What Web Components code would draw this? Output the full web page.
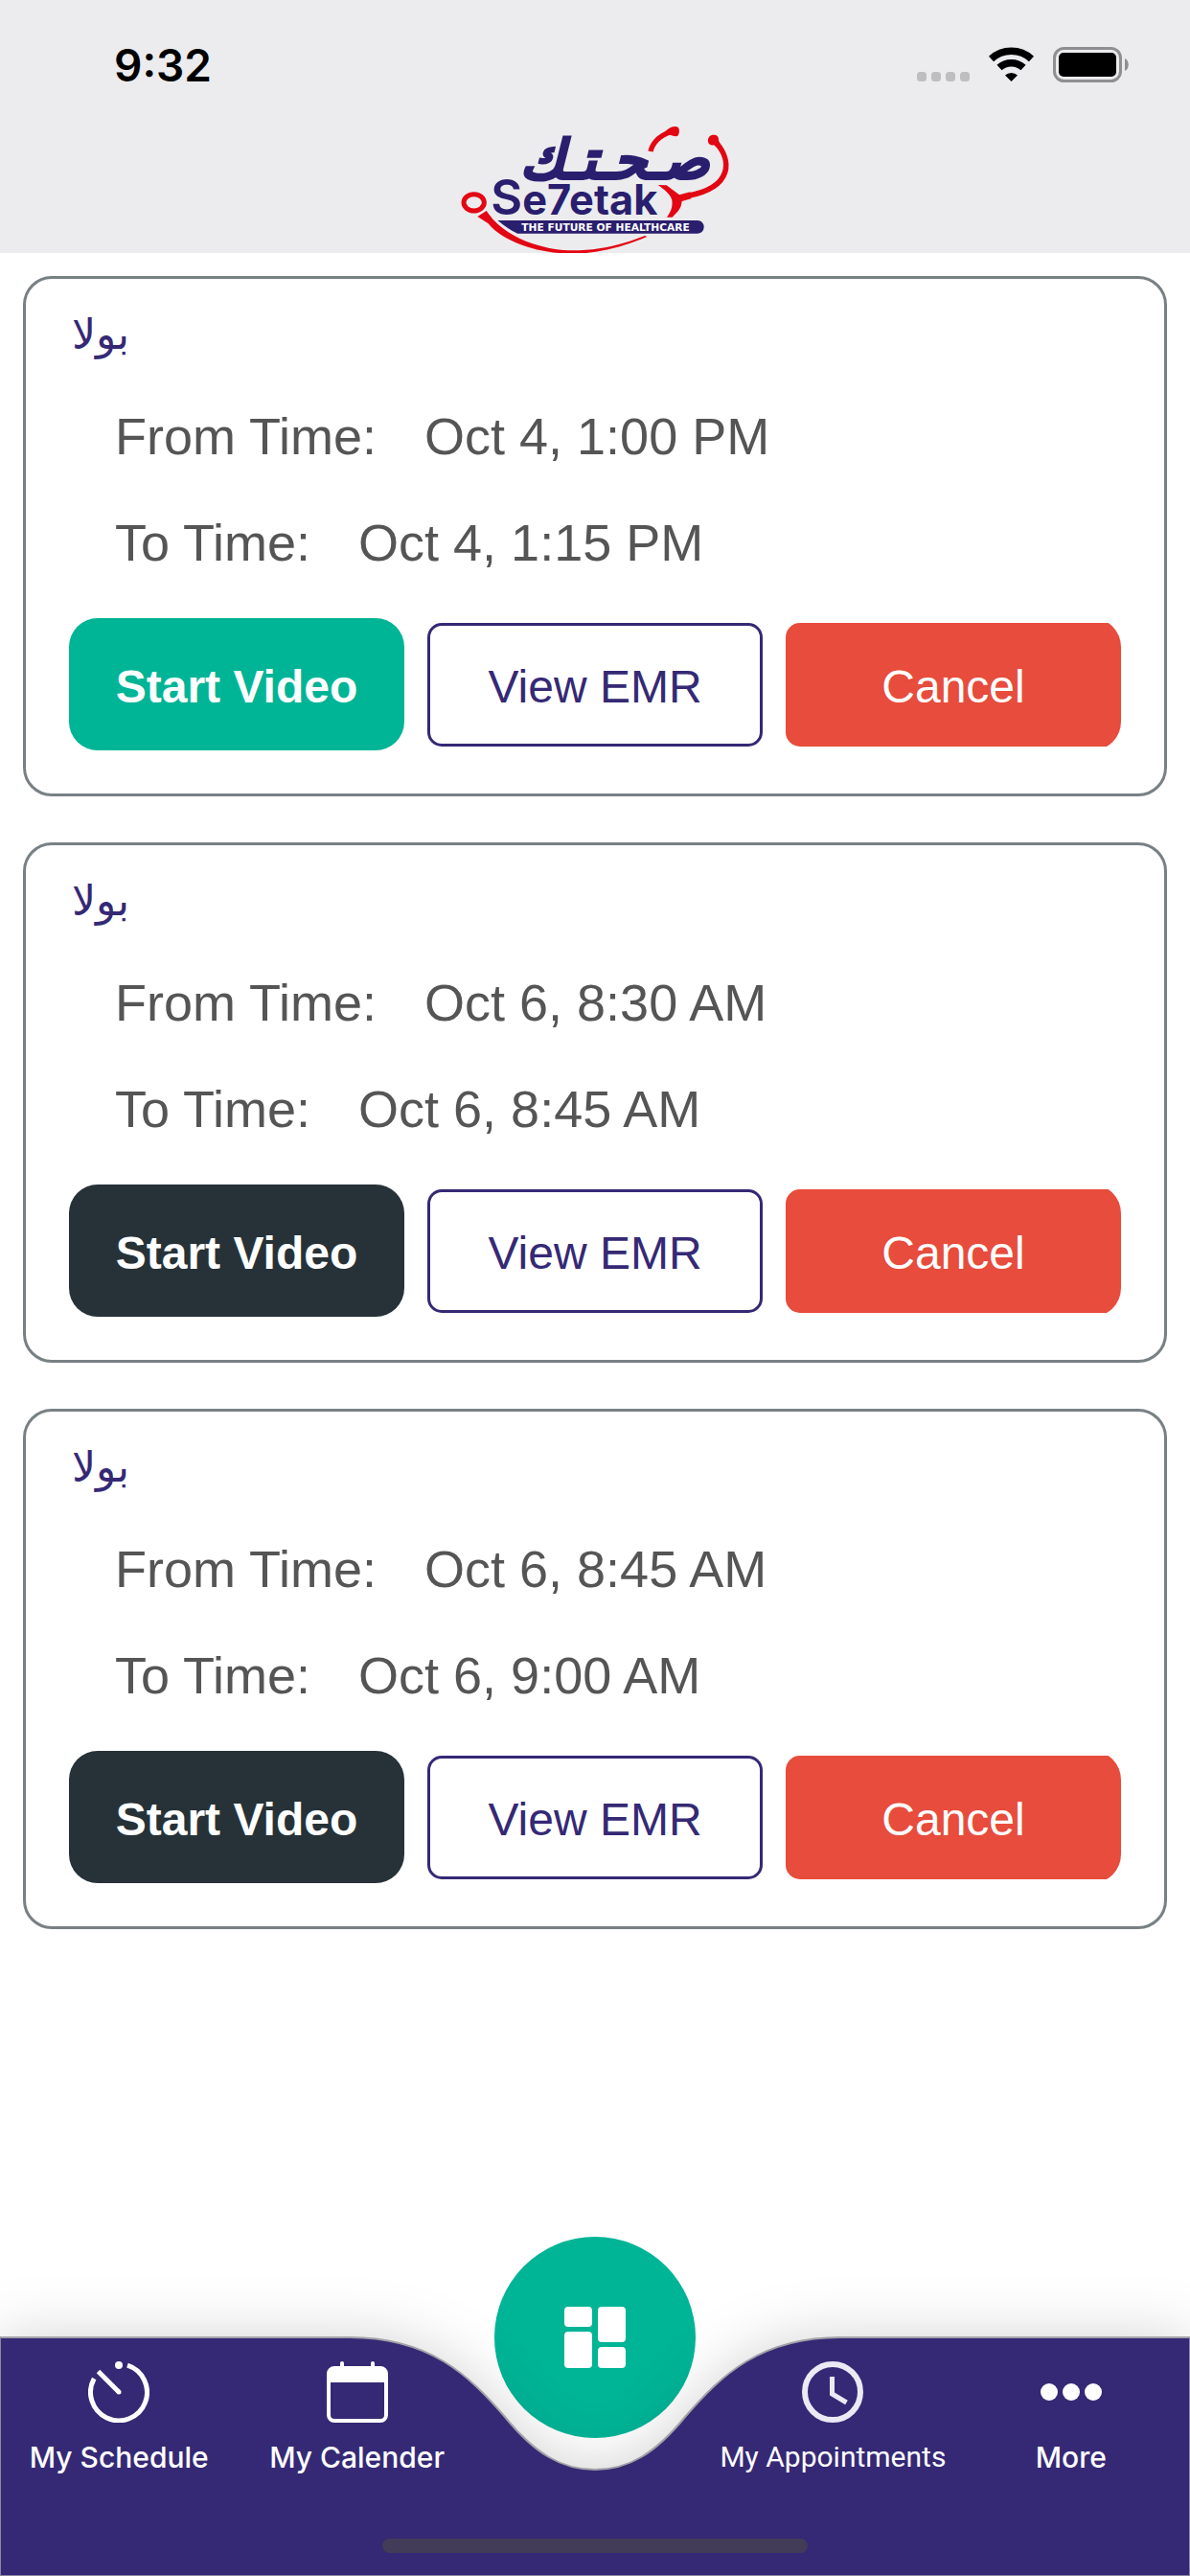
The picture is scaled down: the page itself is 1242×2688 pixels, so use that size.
<!DOCTYPE html>
<html lang="en">
<head>
<meta charset="utf-8">
<meta name="viewport" content="width=device-width, initial-scale=1">
<title>Se7etak – My Appointments</title>
<style>
  html, body { margin: 0; min-height: 100%; }
  body { background: #fff; font-family: "Liberation Sans", Arial, sans-serif; color: #555; }
</style>
</head>
<body>
<app-screen>
  <status-bar slot="header" time="9:32"></status-bar>
  <brand-logo slot="header"></brand-logo>
  <appointment-card name="بولا" from="Oct 4, 1:00 PM" to="Oct 4, 1:15 PM" active></appointment-card>
  <appointment-card name="بولا" from="Oct 6, 8:30 AM" to="Oct 6, 8:45 AM"></appointment-card>
  <appointment-card name="بولا" from="Oct 6, 8:45 AM" to="Oct 6, 9:00 AM"></appointment-card>
  <tab-bar slot="footer">
    <tab-item label="My Schedule">
      <svg width="64" height="64" viewBox="0 0 64 64" fill="none" stroke="#fff" stroke-width="5" aria-hidden="true">
        <path d="M41 4.200A29.500 29.500 0 1 1 6.200 18"/>
        <path d="M10.500 10.500 32 32" stroke-width="5"/><circle cx="32" cy="32" r="2.500" fill="#fff" stroke="none"/>
        <circle cx="32" cy="4" r="4" fill="#fff" stroke="none"/>
      </svg>
    </tab-item>
    <tab-item label="My Calender">
      <svg width="64" height="64" viewBox="0 0 64 64" fill="none" aria-hidden="true">
        <rect x="2" y="7" width="60" height="55" rx="6" stroke="#fff" stroke-width="4"/>
        <path d="M2 22V13a6 6 0 0 1 6-6h48a6 6 0 0 1 6 6v9z" fill="#fff"/>
        <path d="M16 8V2M48 8V2" stroke="#fff" stroke-width="4" stroke-linecap="round"/>
      </svg>
    </tab-item>
    <span></span>
    <tab-item label="My Appointments" compact>
      <svg width="64" height="64" viewBox="0 0 64 64" fill="none" stroke="#ebe9f4" aria-hidden="true">
        <circle cx="32" cy="32" r="29" stroke-width="6"/>
        <path d="M31.500 16V34L46.500 43" stroke-width="5"/>
      </svg>
    </tab-item>
    <tab-item label="More">
      <svg width="64" height="64" viewBox="0 0 64 64" fill="#fff" aria-hidden="true">
        <circle cx="9" cy="32" r="9"/><circle cx="32" cy="32" r="9"/><circle cx="55" cy="32" r="9"/>
      </svg>
    </tab-item>
  </tab-bar>
</app-screen>

<script>
const define = (name, render) => customElements.define(name, class extends HTMLElement {
  connectedCallback() {
    if (this.shadowRoot) return;
    this.attachShadow({ mode: 'open' }).innerHTML = render(this);
  }
});

define('app-screen', () => `
  <style>
    :host { display: flex; flex-direction: column; min-height: 100vh; overflow-x: hidden; }
    header { background: #ececee; display: flex; flex-direction: column; align-items: center; height: 264px; }
    main { flex: 1; display: flex; flex-direction: column; gap: 48px; padding: 24px 24px 120px; }
  </style>
  <header><slot name="header"></slot></header>
  <main><slot></slot></main>
  <slot name="footer"></slot>
`);

define('status-bar', el => `
  <style>
    :host { display: flex; align-self: stretch; justify-content: space-between; align-items: center; box-sizing: border-box; height: 120px; padding: 16px 63px 0 119px; color: #000; }
    time { font: 600 46px/64px Inter, sans-serif; }
    svg { display: block; }
  </style>
  <time>${el.getAttribute('time')}</time>
  <svg width="222" height="38" viewBox="0 0 222 38" aria-hidden="true">
    <g fill="#bebec0"><rect y="26" width="10" height="10" rx="3.500"/><rect x="15" y="26" width="10" height="10" rx="3.500"/><rect x="30" y="26" width="10" height="10" rx="3.500"/><rect x="45" y="26" width="10" height="10" rx="3.500"/></g>
    <g fill="none" stroke="#000" stroke-width="7.500">
      <path d="M77.500 12.500A31 31 0 0 1 119.500 12.500"/>
      <path d="M86 21.500A18.500 18.500 0 0 1 111 21.500"/>
    </g>
    <path d="M92 29.500a9.500 9.500 0 0 1 13 0L98.500 36z"/>
    <rect x="143.500" y="1.500" width="69" height="34" rx="10" fill="none" stroke="#8f8f91" stroke-width="3"/>
    <rect x="148" y="6" width="60" height="25" rx="5"/>
    <path d="M217 12c5 2 5 11 0 13z" fill="#8f8f91"/>
  </svg>
`);

define('brand-logo', () => `
  <style>
    :host { display: block; }
    svg { display: block; }
  </style>
  <svg width="320" height="144" viewBox="0 0 960 432" role="img" aria-label="Se7etak">
    <g fill="none" stroke="#e30613">
      <ellipse cx="101" cy="274" rx="32" ry="26" stroke-width="15"/>
      <path d="M654 114C660 88 680 66 716 53" stroke-width="16"/>
      <path d="M862 90C905 140 915 225 772 253" stroke-width="17"/>
    </g>
    <g fill="#e30613">
      <path d="M700 52C712 38 730 33 740 38C746 46 744 60 738 66C730 68 716 62 700 60z"/>
      <path d="M834 84C832 70 840 62 852 62C864 62 868 70 867 80L876 98L862 102L852 94C842 96 836 92 834 84z"/>
      <path d="M112 318L140 300L160 326C230 400 340 424 410 424C500 424 570 404 636 378L643 381C570 412 490 434 410 434C300 434 190 396 146 340z"/>
      <path d="M677 219L704 220L744 250L778 241L781 262L752 270C750 292 742 300 722 320H705C716 304 724 290 721 266C716 248 700 236 677 219z"/>
    </g>
    <path d="M175 330H800C828 330 828 371 800 371H237C215 360 200 350 175 330z" fill="#2a1e6e"/>
    <text x="246" y="198" fill="#2a1e6e" stroke="#2a1e6e" stroke-width="7" font-family="'DejaVu Sans'" font-weight="700" font-style="italic" font-size="168" direction="ltr">صـحـتـك</text>
    <text x="154" y="313" fill="#2a1e6e" font-family="Inter" font-weight="700" font-size="130"><tspan font-weight="600" font-size="152">S</tspan>e7etak</text>
    <text x="250" y="362" fill="#fff" font-family="'DejaVu Sans'" font-weight="700" font-size="32">THE FUTURE OF HEALTHCARE</text>
  </svg>
`);

define('appointment-card', el => `
  <style>
    :host { display: block; box-sizing: border-box; border: 3px solid #788084; border-radius: 30px; padding: 21px 45px 45px; background: #fff; }
    h2 { margin: 0 0 0 3px; height: 88px; font: 400 44px/76px "Liberation Serif", "DejaVu Sans", serif; color: #352975; }
    dl { margin: 0 0 23px 48px; font-size: 54px; line-height: 111px; color: #555; }
    dl div { display: flex; gap: 50px; }
    dd { margin: 0; }
    .actions { display: grid; grid-template-columns: repeat(3, 1fr); gap: 24px; align-items: center; }
    button { box-sizing: border-box; margin: 0; padding: 6px 0 0; border: 0; height: 138px; font: 400 48px/60px "Liberation Sans", Arial, sans-serif; color: #fff; }
    .start { border-radius: 30px; background: #263238; font-weight: 700; }
    :host([active]) .start { background: #00b496; }
    .view { height: 129px; border: 3px solid #352975; border-radius: 15px; background: #fff; color: #352975; }
    .cancel { border-radius: 0 30px 30px 0; background: #e74c3c; clip-path: inset(5px 0 4px round 15px 0 0 15px); }
  </style>
  <h2><bdi>${el.getAttribute('name')}</bdi></h2>
  <dl>
    <div><dt>From Time:</dt><dd>${el.getAttribute('from')}</dd></div>
    <div><dt>To Time:</dt><dd>${el.getAttribute('to')}</dd></div>
  </dl>
  <div class="actions">
    <button class="start" type="button">Start Video</button>
    <button class="view" type="button">View EMR</button>
    <button class="cancel" type="button">Cancel</button>
  </div>
`);

define('tab-bar', () => `
  <style>
    :host { display: block; position: relative; height: 250px; }
    .home { position: absolute; left: 50%; top: -104px; margin-left: -105px; width: 210px; height: 210px; padding: 0; border: 0; border-radius: 50%; background: #00b496; display: grid; place-items: center; }
    .shape { position: absolute; inset: 0; display: flex; filter: drop-shadow(0 0 30px rgba(0,0,0,.17)); pointer-events: none; }
    .side { flex: 1; box-sizing: border-box; background: #352975; border-top: 2px solid #a3a1a8; border-bottom: 1px solid #8b87a3; }
    .side:first-child { border-left: 1px solid #8b87a3; }
    .side:last-child { border-right: 1px solid #8b87a3; }
    nav { position: relative; display: grid; grid-template-columns: repeat(5, 1fr); padding-top: 26px; pointer-events: none; }
    .indicator { position: absolute; left: 50%; bottom: 24px; width: 444px; height: 15px; margin-left: -222px; border-radius: 8px; background: #433c58; }
  </style>
  <button class="home" type="button" aria-label="Dashboard">
    <svg width="64" height="64" viewBox="0 0 64 64" fill="#fff" aria-hidden="true">
      <rect width="29" height="21" rx="4"/><rect y="26" width="29" height="38" rx="4"/>
      <rect x="35" width="29" height="37" rx="4"/><rect x="35" y="42" width="29" height="22" rx="4"/>
    </svg>
  </button>
  <div class="shape">
    <div class="side"></div>
    <svg width="512" height="250" viewBox="0 0 512 250" aria-hidden="true">
      <path d="M0 1C83 1 124 40 162 84C193 122 221 139 256 139C291 139 319 122 350 84C388 40 429 1 512 1V250H0z" fill="#352975"/>
      <path d="M0 1C83 1 124 40 162 84C193 122 221 139 256 139C291 139 319 122 350 84C388 40 429 1 512 1" fill="none" stroke="#a3a1a8" stroke-width="2"/>
      <path d="M0 249.500H512" stroke="#8b87a3"/>
    </svg>
    <div class="side"></div>
  </div>
  <nav><slot></slot></nav>
  <div class="indicator"></div>
`);

define('tab-item', el => `
  <style>
    :host { display: block; pointer-events: auto; }
    a { display: flex; flex-direction: column; align-items: center; gap: 18px; color: #fff; text-decoration: none; font: 500 30px/36px Inter, sans-serif; white-space: nowrap; }
    :host([compact]) a { font-family: Roboto, sans-serif; font-weight: 400; }
  </style>
  <a href="#"><slot></slot><span>${el.getAttribute('label')}</span></a>
`);
</script>
</body>
</html>
